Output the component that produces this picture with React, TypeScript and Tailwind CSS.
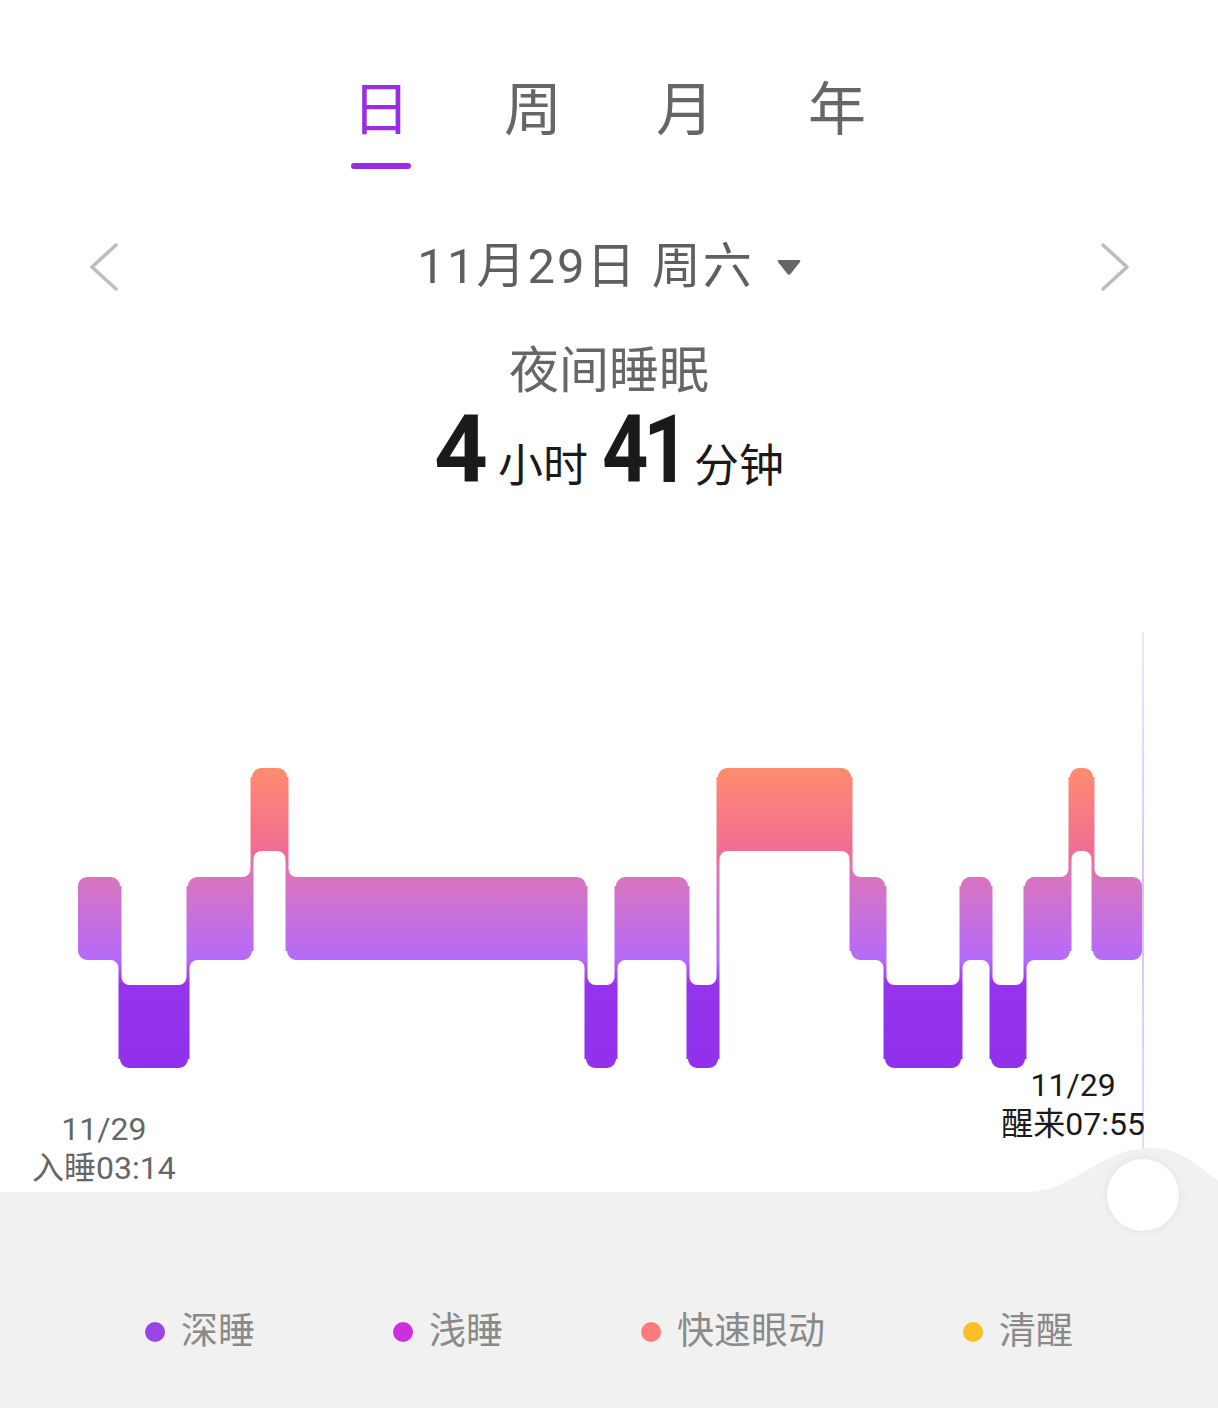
import React from 'react';

type Level = 'R' | 'L' | 'D';

const TOP: Record<Level, number> = { R: 768, L: 877, D: 985 };
const H = 83;
const RANK: Record<Level, number> = { R: 0, L: 1, D: 2 };
const RAD = 9;
const FIL = 8;

const segments: [number, number, Level][] = [
  [78, 120, 'L'],
  [120, 188, 'D'],
  [188, 252, 'L'],
  [252, 287, 'R'],
  [287, 586, 'L'],
  [586, 616, 'D'],
  [616, 688, 'L'],
  [688, 718, 'D'],
  [718, 851, 'R'],
  [851, 885, 'L'],
  [885, 961, 'D'],
  [961, 991, 'L'],
  [991, 1025, 'D'],
  [1025, 1070, 'L'],
  [1070, 1093, 'R'],
  [1093, 1142, 'L'],
];

function roundRect(x1: number, y1: number, x2: number, y2: number, r: number[]) {
  const [tl, tr, br, bl] = r;
  return `M ${x1 + tl} ${y1} H ${x2 - tr} A ${tr} ${tr} 0 0 1 ${x2} ${y1 + tr} V ${y2 - br} A ${br} ${br} 0 0 1 ${x2 - br} ${y2} H ${x1 + bl} A ${bl} ${bl} 0 0 1 ${x1} ${y2 - bl} V ${y1 + tl} A ${tl} ${tl} 0 0 1 ${x1 + tl} ${y1} Z`;
}

// concave corner where a block meets the connector
function fillet(cx: number, cy: number, dx: number, dy: number, r: number) {
  const sweep = dx * dy > 0 ? 1 : 0;
  return `M ${cx + dx * r} ${cy} L ${cx} ${cy} L ${cx} ${cy + dy * r} A ${r} ${r} 0 0 ${sweep} ${cx + dx * r} ${cy} Z`;
}

function buildChart() {
  const corners = segments.map(() => [RAD, RAD, RAD, RAD]);
  const extra: string[] = [];
  for (let i = 0; i < segments.length - 1; i++) {
    const a = segments[i];
    const b = segments[i + 1];
    const t = a[1];
    const aUpper = RANK[a[2]] < RANK[b[2]];
    const yTop = Math.min(TOP[a[2]], TOP[b[2]]);
    const yBot = Math.max(TOP[a[2]], TOP[b[2]]) + H;
    extra.push(`M ${t - 1.5} ${yTop + RAD} H ${t + 1.5} V ${yBot - RAD} H ${t - 1.5} Z`);
    if (aUpper) {
      corners[i][2] = 0;
      corners[i + 1][0] = 0;
      extra.push(fillet(t - 1.5, TOP[a[2]] + H, -1, 1, FIL));
      extra.push(fillet(t + 1.5, TOP[b[2]], 1, -1, FIL));
    } else {
      corners[i][1] = 0;
      corners[i + 1][3] = 0;
      extra.push(fillet(t - 1.5, TOP[a[2]], -1, -1, FIL));
      extra.push(fillet(t + 1.5, TOP[b[2]] + H, 1, 1, FIL));
    }
  }
  const blocks = segments.map(([x1, x2, lv], i) => roundRect(x1, TOP[lv], x2, TOP[lv] + H, corners[i]));
  return [...blocks, ...extra].join(' ');
}

const chartPath = buildChart();

const Chevron = ({ dir }: { dir: 'left' | 'right' }) => (
  <svg width="32" height="48" viewBox="0 0 32 48" fill="none">
    <polyline
      points={dir === 'left' ? '28,2 4,24 28,46' : '4,2 28,24 4,46'}
      stroke="#bdbdbd"
      strokeWidth="3.5"
      strokeLinecap="round"
      strokeLinejoin="round"
    />
  </svg>
);

const tabs = ['日', '周', '月', '年'];

const legend = [
  { label: '深睡', color: 'bg-[#9b45e6]' },
  { label: '浅睡', color: 'bg-[#cc2fdc]' },
  { label: '快速眼动', color: 'bg-[#ff7a7a]' },
  { label: '清醒', color: 'bg-[#fbbf24]' },
];

export default function App() {
  return (
    <div className="w-[1218px] h-[1408px] bg-white flex flex-col overflow-hidden font-['Roboto','Noto_Sans_CJK_SC',sans-serif]">
      <div className="h-[1192px] flex flex-col shrink-0">
        {/* tabs */}
        <div className="flex justify-center items-start pt-[81px]">
          {tabs.map((t, i) => (
            <div key={t} className="w-[152px] flex flex-col items-center">
              <span
                className={`text-[58px] leading-[58px] ${i === 0 ? 'text-[#9a2de3]' : 'text-[#666666]'}`}
              >
                {t}
              </span>
              {i === 0 && <div className="mt-[24px] h-[6px] w-[60px] rounded-full bg-[#9a2de3]" />}
            </div>
          ))}
        </div>

        {/* date row */}
        <div className="mt-[74px] h-[48px] flex items-center justify-between pl-[88px] pr-[87px]">
          <Chevron dir="left" />
          <div className="flex items-center">
            <span className="text-[49px] leading-[48px] tracking-[2px] text-[#5f5f5f]">11月29日 周六</span>
            <svg className="ml-[22px]" width="26" height="18" viewBox="0 0 26 18">
              <path d="M3 2 H23 Q25 2 24 4 L14.5 16 Q13 17.5 11.5 16 L2 4 Q1 2 3 2 Z" fill="#666666" />
            </svg>
          </div>
          <Chevron dir="right" />
        </div>

        {/* title */}
        <div className="mt-[55px] text-center text-[50px] leading-[50px] text-[#666666]">夜间睡眠</div>

        {/* duration */}
        <div className="mt-[7px] flex justify-center items-baseline text-[#1a1a1a]">
          <span className="text-[94px] leading-[94px] font-bold">4</span>
          <span className="ml-[10px] text-[45px] leading-[45px]">小时</span>
          <span className="ml-[14px] inline-block w-[74px] whitespace-nowrap text-[94px] leading-[94px] font-bold">
            <span className="inline-block origin-left scale-x-[0.86] tracking-[-6px]">41</span>
          </span>
          <span className="ml-[18px] text-[45px] leading-[45px]">分钟</span>
        </div>

        {/* chart */}
        <div className="mt-auto h-[592px] grid">
          <svg
            className="col-start-1 row-start-1"
            width="1218"
            height="592"
            viewBox="0 600 1218 592"
          >
            <defs>
              <linearGradient id="sleepGrad" gradientUnits="userSpaceOnUse" x1="0" y1="768" x2="0" y2="1068">
                <stop offset="0" stopColor="#ff8c6e" />
                <stop offset="0.277" stopColor="#f06c95" />
                <stop offset="0.363" stopColor="#d975bf" />
                <stop offset="0.64" stopColor="#b56afa" />
                <stop offset="0.723" stopColor="#9534ec" />
                <stop offset="1" stopColor="#9231ec" />
              </linearGradient>
              <linearGradient id="lineGrad" gradientUnits="userSpaceOnUse" x1="0" y1="632" x2="0" y2="1150">
                <stop offset="0" stopColor="#efe6fe" />
                <stop offset="0.5" stopColor="#d6c2fb" />
                <stop offset="1" stopColor="#e4d8fd" />
              </linearGradient>
            </defs>
            <path d={chartPath} fill="url(#sleepGrad)" />
            <rect x="1142" y="632" width="2" height="560" fill="url(#lineGrad)" />
          </svg>
          <div className="col-start-1 row-start-1 flex justify-between pl-[32px] pr-[73px]">
            <div className="self-end mb-[4px] text-center text-[32px] leading-[39px] text-[#666666]">
              <div>11/29</div>
              <div>入睡03:14</div>
            </div>
            <div className="self-end mb-[48px] text-center text-[32px] leading-[39px] text-[#1a1a1a]">
              <div>11/29</div>
              <div>醒来07:55</div>
            </div>
          </div>
        </div>
      </div>

      {/* bottom panel */}
      <div className="relative h-[216px] bg-[#f1f1f1] shrink-0">
        <svg className="absolute right-0 -top-[44px]" width="200" height="45" viewBox="1018 1148 200 45">
          <path
            d="M1018 1193 L1018 1192 L1025 1192 C1075 1192 1100 1148 1150 1148 C1185 1148 1200 1170 1218 1180 L1218 1193 Z"
            fill="#f1f1f1"
          />
        </svg>
        <div className="absolute left-[1107px] -top-[33px] w-[72px] h-[72px] rounded-full bg-white shadow-[0_0_10px_rgba(0,0,0,0.07)]" />
        <div className="mt-[120px] h-[40px] flex items-center justify-center gap-[138px]">
          {legend.map((l) => (
            <div key={l.label} className="flex items-center">
              <span className={`w-[20px] h-[20px] rounded-full ${l.color}`} />
              <span className="ml-[16px] text-[37px] leading-[40px] text-[#8a8a8a]">{l.label}</span>
            </div>
          ))}
        </div>
      </div>
    </div>
  );
}
